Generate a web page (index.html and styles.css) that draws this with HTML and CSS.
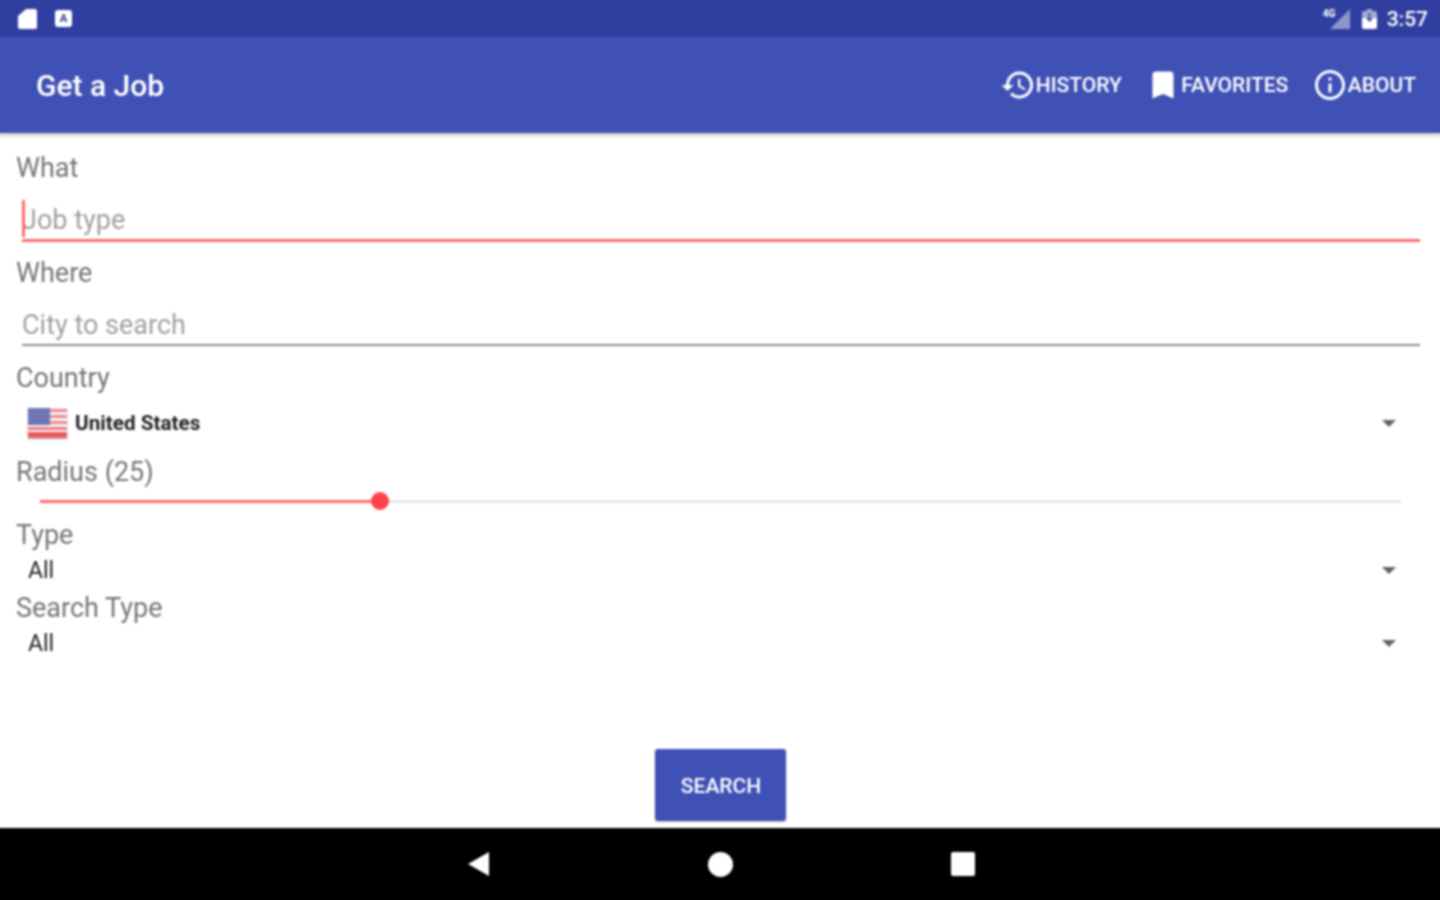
FILE: index.html
```html
<!DOCTYPE html>
<html lang="en">
<head>
    <meta charset="UTF-8">
    <meta name="viewport" content="width=device-width, initial-scale=1.0">
    <title>Get a Job</title>
    <link rel="stylesheet" href="styles.css">
</head>
<body>
  <div class="screen">
    <div class="status-bar">
      <div class="status-left">
        <svg class="sd-icon" viewBox="0 0 19 20"><path d="M8 0h9a2 2 0 0 1 2 2v16a2 2 0 0 1-2 2H2a2 2 0 0 1-2-2V7z" fill="#fff"/></svg>
        <div class="a-icon"><span>A</span></div>
      </div>
      <div class="status-right">
        <span class="net-label">4G</span>
        <svg class="signal-icon" viewBox="0 0 20 20"><path d="M20 0v20H0z" fill="#fff" fill-opacity=".45"/></svg>
        <svg class="battery-icon" viewBox="0 0 15 20"><path d="M5 0h5v2h3a2 2 0 0 1 2 2v5H0V4a2 2 0 0 1 2-2h3z" fill="#fff" fill-opacity=".55"/><path d="M0 9h15v9a2 2 0 0 1-2 2H2a2 2 0 0 1-2-2z" fill="#fff"/><path d="M7.5 4v7M5 9l2.5 3L10 9" stroke="#303f9f" stroke-width="1.4" fill="none"/></svg>
        <span class="clock">3:57</span>
      </div>
    </div>

    <header class="app-bar">
      <h1 class="app-title">Get a Job</h1>
      <nav class="actions">
        <a class="action">
          <svg viewBox="0 0 24 24"><path d="M13 3a9 9 0 0 0-9 9H1l3.89 3.89.07.14L9 12H6c0-3.87 3.13-7 7-7s7 3.13 7 7-3.13 7-7 7c-1.93 0-3.68-.79-4.94-2.06l-1.42 1.42A8.954 8.954 0 0 0 13 21a9 9 0 0 0 0-18zm-1 5v5l4.28 2.54.72-1.21-3.5-2.08V8H12z"/></svg>
          HISTORY
        </a>
        <a class="action">
          <svg viewBox="0 0 24 24"><path d="M17 3H7c-1.1 0-2 .9-2 2v16l7-3 7 3V5c0-1.1-.9-2-2-2z"/></svg>
          FAVORITES
        </a>
        <a class="action">
          <svg viewBox="0 0 24 24"><path d="M11 7h2v2h-2zm0 4h2v6h-2zm1-9C6.48 2 2 6.48 2 12s4.48 10 10 10 10-4.48 10-10S17.52 2 12 2zm0 18c-4.41 0-8-3.59-8-8s3.59-8 8-8 8 3.59 8 8-3.59 8-8 8z"/></svg>
          ABOUT
        </a>
      </nav>
    </header>

    <main class="content">
      <div class="field-label">What</div>
      <div class="text-field focused"><span class="caret"></span>Job type</div>

      <div class="field-label">Where</div>
      <div class="text-field">City to search</div>

      <div class="field-label">Country</div>
      <div class="spinner country">
        <svg class="flag" viewBox="0 0 39 30">
          <rect width="39" height="30" fill="#f4f4f8"/>
          <rect y="1" x="21" width="18" height="3" fill="#ee8a90"/>
          <rect y="7" x="21" width="18" height="3" fill="#ee8a90"/>
          <rect y="13" x="21" width="18" height="3" fill="#ee8a90"/>
          <rect y="19" width="39" height="3" fill="#ee7a82"/>
          <rect y="24" width="39" height="6" fill="#ea5a64"/>
          <rect width="22" height="17" fill="#6f76b4"/>
        </svg>
        <span class="country-name">United States</span>
        <span class="arrow"></span>
      </div>

      <div class="field-label radius">Radius (25)</div>
      <div class="slider">
        <div class="track">
          <div class="track-fill" style="width: 25%"><span class="thumb"></span></div>
        </div>
      </div>

      <div class="field-label">Type</div>
      <div class="spinner"><span>All</span><span class="arrow"></span></div>

      <div class="field-label search-type">Search Type</div>
      <div class="spinner"><span>All</span><span class="arrow"></span></div>

      <button class="search-btn">SEARCH</button>
    </main>

    <div class="nav-bar">
      <svg class="nav-icon" viewBox="0 0 24 26"><path d="M23 1v24L2 13z" fill="#fff"/></svg>
      <span class="nav-home"></span>
      <span class="nav-recent"></span>
    </div>
  </div>
</body>
</html>
```

FILE: styles.css
```css
* {
    box-sizing: border-box;
}
html, body {
    overflow: hidden;
}
body {
    margin: 0;
    height: 900px;
    font-family: Roboto, "Liberation Sans", sans-serif;
    background-color: #fff;
}
/* 4px overscan on every side so the blur doesn't fade out at the window edge */
.screen {
    width: 1448px;
    height: 908px;
    margin: -4px;
    display: flex;
    flex-direction: column;
    filter: blur(0.8px);
}

/* status bar */
.status-bar {
    height: 41px;
    flex: none;
    background-color: #303f9f;
    color: #fff;
    display: flex;
    justify-content: space-between;
    align-items: center;
    padding: 4px 16px 0 22px;
}
.status-left {
    display: flex;
    align-items: center;
    gap: 18px;
}
.sd-icon {
    width: 19px;
    height: 20px;
}
.a-icon {
    width: 17px;
    height: 17px;
    background-color: #fff;
    border-radius: 3px;
    color: #303f9f;
    font-size: 11px;
    font-weight: 700;
    line-height: 17px;
    text-align: center;
}
.status-right {
    display: flex;
    align-items: center;
}
.net-label {
    font-size: 10px;
    font-weight: 700;
    width: 7px;
    margin-bottom: 10px;
    white-space: nowrap;
}
.signal-icon {
    width: 20px;
    height: 20px;
}
.battery-icon {
    width: 15px;
    height: 20px;
    margin-left: 12px;
}
.clock {
    font-size: 21px;
    font-weight: 500;
    margin-left: 10px;
}

/* app bar */
.app-bar {
    height: 96px;
    flex: none;
    background-color: #3f51b5;
    color: #fff;
    display: flex;
    justify-content: space-between;
    align-items: center;
    padding: 0 28px 0 40px;
    box-shadow: 0 2px 4px rgba(0, 0, 0, 0.25);
    z-index: 1;
}
.app-title {
    margin: 0;
    font-size: 30px;
    font-weight: 500;
}
.actions {
    display: flex;
    gap: 23.5px;
}
.action {
    display: flex;
    align-items: center;
    font-size: 21px;
    font-weight: 500;
}
.action svg {
    width: 36px;
    height: 36px;
    fill: #fff;
}

/* form */
.content {
    flex: 1;
    display: flex;
    flex-direction: column;
    padding: 17px 24px 7px 20px;
}
.field-label {
    height: 36px;
    line-height: 37px;
    font-size: 27px;
    color: #757575;
    flex: none;
}
.text-field {
    height: 55px;
    flex: none;
    margin: 0 0 14px 6px;
    padding-top: 15px;
    line-height: 38px;
    font-size: 27px;
    color: #a0a0a0;
    border-bottom: 2px solid #8a8a8a;
    position: relative;
}
.text-field.focused {
    height: 56px;
    margin-bottom: 13px;
    border-bottom: 3px solid #ff6a6e;
}
.caret {
    position: absolute;
    left: 0;
    top: 14px;
    width: 3px;
    height: 37px;
    background-color: #ff6a6e;
}
.spinner {
    height: 35px;
    flex: none;
    display: flex;
    align-items: center;
    justify-content: space-between;
    padding: 0 24px 0 12px;
    font-size: 23px;
    color: #222;
}
.spinner.country {
    height: 54px;
    justify-content: flex-start;
    gap: 8px;
}
.country-name {
    font-size: 20.7px;
    font-weight: 700;
    color: #222;
}
.flag {
    width: 39px;
    height: 30px;
    box-shadow: 0 1px 2px rgba(0, 0, 0, 0.3);
}
.arrow {
    width: 0;
    height: 0;
    border-left: 7px solid transparent;
    border-right: 7px solid transparent;
    border-top: 7px solid #616161;
}
.country .arrow {
    margin-left: auto;
}
.field-label.radius {
    margin-top: 4px;
}
.field-label.search-type {
    margin-top: 2px;
}
.slider {
    height: 27px;
    flex: none;
    padding: 10px 19px 0 24px;
}
.track {
    height: 3px;
    background-color: #e6e6e6;
}
.track-fill {
    height: 3px;
    background-color: #ff6a6e;
    position: relative;
}
.thumb {
    position: absolute;
    right: -9px;
    top: -8px;
    width: 18px;
    height: 18px;
    border-radius: 50%;
    background-color: #ff4348;
}
.search-btn {
    margin: auto auto 0;
    width: 131px;
    height: 72px;
    flex: none;
    padding: 2px 0 0 2px;
    background-color: #3f51b5;
    color: #fff;
    border: none;
    border-radius: 3px;
    font-family: inherit;
    font-size: 21px;
    font-weight: 500;
    box-shadow: 0 1px 2px rgba(0, 0, 0, 0.25);
    position: relative;
    left: 2px;
}

/* android nav */
.nav-bar {
    height: 76px;
    flex: none;
    background-color: #000;
    display: flex;
    justify-content: center;
    align-items: center;
    gap: 218px;
    padding-bottom: 4px;
}
.nav-icon {
    width: 24px;
    height: 26px;
}
.nav-home {
    width: 25px;
    height: 25px;
    border-radius: 50%;
    background-color: #fff;
}
.nav-recent {
    width: 24px;
    height: 24px;
    border-radius: 2px;
    background-color: #fff;
}
```
